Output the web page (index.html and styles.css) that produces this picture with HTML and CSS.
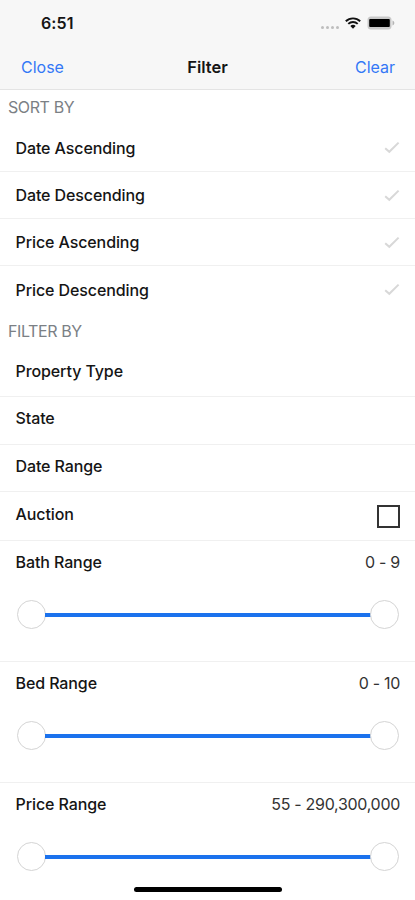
FILE: index.html
```html
<!DOCTYPE html>
<html lang="en">
<head>
<meta charset="utf-8">
<meta name="viewport" content="width=device-width, initial-scale=1">
<title>Filter</title>
<link rel="stylesheet" href="styles.css">
</head>
<body>
<svg width="0" height="0" class="defs"><symbol id="check" viewBox="0 0 16 13"><path d="M1.2 7.2 5.3 10.8 14.6 1.6" fill="none" stroke="currentColor" stroke-width="2"/></symbol></svg>
<main class="screen">
  <header class="header">
    <div class="status">
      <span class="time">6:51</span>
      <div class="indicators">
        <span class="signal"><i></i><i></i><i></i><i></i></span>
        <svg class="wifi" viewBox="0 0 16 12"><path d="M.8 4.3a10.3 10.3 0 0 1 14.4 0M3.3 6.9a6.7 6.7 0 0 1 9.4 0" fill="none" stroke="#111" stroke-width="1.9"/><path d="M5.3 9.1a3.9 3.9 0 0 1 5.4 0L8 11.8z" fill="#111"/></svg>
        <svg class="battery" viewBox="0 0 28 14"><rect x=".5" y=".5" width="24" height="13" rx="3.5" fill="#c9c9c9"/><rect x="2.2" y="3" width="20.6" height="8" rx="1" fill="#000"/><path d="M25.5 4.5c2.4.8 2.4 4.2 0 5z" fill="#b5b5b5"/></svg>
      </div>
    </div>
    <nav class="nav">
      <a class="action close">Close</a>
      <h1 class="title">Filter</h1>
      <a class="action clear">Clear</a>
    </nav>
  </header>
  <h2 class="heading">SORT BY</h2>
  <section class="sort">
    <div class="row"><span>Date Ascending</span><svg class="check"><use href="#check"/></svg></div>
    <div class="row"><span>Date Descending</span><svg class="check"><use href="#check"/></svg></div>
    <div class="row"><span>Price Ascending</span><svg class="check"><use href="#check"/></svg></div>
    <div class="row"><span>Price Descending</span><svg class="check"><use href="#check"/></svg></div>
  </section>
  <h2 class="heading">FILTER BY</h2>
  <section class="filters">
    <div class="row"><span>Property Type</span></div>
    <div class="row"><span>State</span></div>
    <div class="row"><span>Date Range</span></div>
    <div class="row"><span>Auction</span><span class="checkbox"></span></div>
    <div class="range"><div class="range-label"><span>Bath Range</span><span class="value">0 - 9</span></div><div class="slider"><i class="knob"></i><i class="track"></i><i class="knob"></i></div></div>
    <div class="range"><div class="range-label"><span>Bed Range</span><span class="value">0 - 10</span></div><div class="slider"><i class="knob"></i><i class="track"></i><i class="knob"></i></div></div>
    <div class="range"><div class="range-label"><span>Price Range</span><span class="value">55 - 290,300,000</span></div><div class="slider"><i class="knob"></i><i class="track"></i><i class="knob"></i></div></div>
  </section>
  <div class="home"></div>
</main>
</body>
</html>
```
FILE: styles.css
```css
* { box-sizing: border-box; }
body { margin: 0; background: #fff; color: #151515; font: 500 16px/20px Inter, "Liberation Sans", sans-serif; letter-spacing: -.1px; }
.defs { position: absolute; }
.screen { position: relative; width: 415px; height: 900px; overflow: hidden; }
.header { height: 90px; background: #f7f7f7; border-bottom: 1px solid #e4e4e4; }
.status { display: flex; justify-content: space-between; height: 46px; padding: 13px 20px 0 41px; }
.time { font-weight: 600; letter-spacing: .1px; }
.indicators { display: flex; align-items: center; height: 20px; }
.signal { display: flex; gap: 2px; margin: 8px 6px 0 0; }
.signal i { width: 3px; height: 3px; border-radius: 50%; background: #bebebe; }
.wifi { width: 16px; height: 12px; margin-right: 6px; }
.battery { width: 28px; height: 14px; }
.nav { display: grid; grid-template-columns: 1fr auto 1fr; height: 43px; padding: 11px 20px 0; letter-spacing: 0; }
.action { color: #3478f6; font-weight: 400; font-size: 16px; }
.close { padding-left: 1px; }
.clear { text-align: right; }
.title { margin: 0; font-size: 16.5px; line-height: 20px; font-weight: 600; }
.heading { height: 34px; margin: 0; padding: 7px 8px 0; color: #7b8085; font-size: 16px; line-height: 20px; font-weight: 400; letter-spacing: -.4px; }
.row { display: flex; justify-content: space-between; align-items: center; height: 48px; padding: 0 15px 5px; border-bottom: 1px solid #f0f0f0; }
.row > span:first-child, .range-label > span:first-child { padding-left: .5px; }
.sort .row { height: 47px; padding-bottom: 0; }
.sort .row:first-child { height: 48px; }
.sort .row:last-child { height: 48px; padding-bottom: 1px; border: 0; }
.filters .row:first-child { height: 49px; padding-bottom: 3px; }
.filters .row:nth-child(3) { height: 47px; padding-bottom: 4px; }
.filters .row:nth-child(4) { height: 49px; padding-bottom: 5px; }
.check { width: 16px; height: 13px; color: #d8d8d8; }
.checkbox { width: 23px; height: 23px; border: 2px solid #333; margin-top: 5px; }
.range { height: 121px; padding: 11px 15px 0; border-bottom: 1px solid #f0f0f0; }
.range:last-child { border: 0; }
.range-label { display: flex; justify-content: space-between; height: 20px; }
.value { font-weight: 400; color: #333; letter-spacing: -.3px; }
.slider { display: flex; align-items: center; height: 29px; margin: 28px 1px 0 2px; }
.knob { flex: none; width: 29px; height: 29px; border: 1px solid #d4d4d4; border-radius: 50%; background: #fff; }
.track { flex: 1; height: 4px; margin: 0 -1px; background: #1b72ed; }
.home { position: absolute; left: 134px; top: 887px; width: 148px; height: 5px; border-radius: 3px; background: #000; }
```
